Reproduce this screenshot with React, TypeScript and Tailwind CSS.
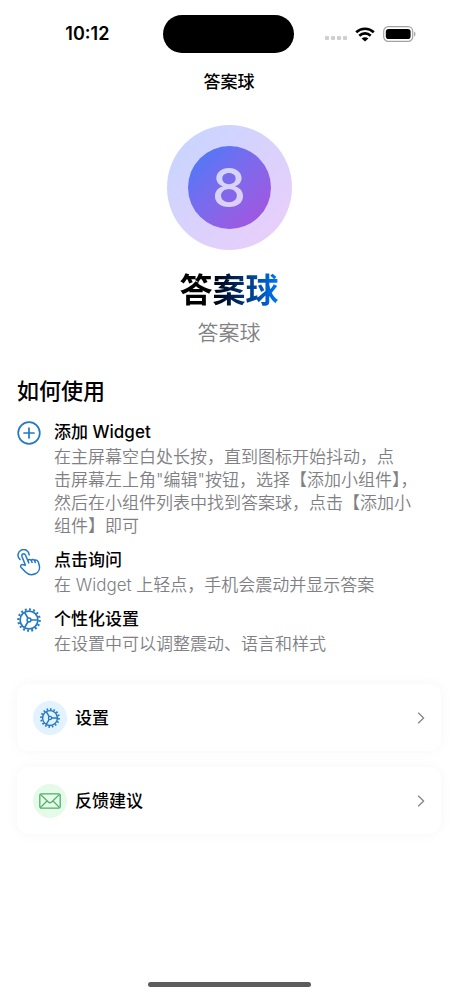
import type { ReactNode } from "react";

function WifiIcon() {
  return (
    <svg viewBox="0 0 20 15" className="h-[15px] w-5" aria-hidden="true">
      <g fill="none" stroke="#000" strokeWidth="2.7">
        <path d="M1.2 5.2C6.2.6 13.8.6 18.8 5.2" />
        <path d="M4.3 8.7c3.3-3 8.1-3 11.4 0" />
      </g>
      <path d="M10 14.6 6.6 11.4c1.9-1.7 4.9-1.7 6.8 0z" fill="#000" />
    </svg>
  );
}

function BatteryIcon() {
  return (
    <svg viewBox="0 0 33 16" className="h-4 w-[33px]" aria-hidden="true">
      <rect x=".7" y=".7" width="29" height="14.6" rx="4.6" fill="#fff" stroke="#a3a3a3" strokeWidth="1.2" />
      <rect x="2.8" y="3" width="24.8" height="10" rx="2.8" fill="#000" />
      <path d="M31.2 5.4c1.6.7 1.6 4.5 0 5.2z" fill="#999" />
    </svg>
  );
}

function PlusCircleIcon() {
  return (
    <svg viewBox="0 0 24 24" className="size-6" fill="none" stroke="#2478c4" strokeWidth="1.7" strokeLinecap="round" aria-hidden="true">
      <circle cx="12" cy="12" r="10.8" />
      <path d="M12 7v10M7 12h10" />
    </svg>
  );
}

function TapIcon() {
  return (
    <svg viewBox="0 0 24 27" className="h-[27px] w-6" fill="none" stroke="#2478c4" strokeWidth="1.5" strokeLinecap="round" strokeLinejoin="round" aria-hidden="true">
      <path d="M3 10.4A5.6 5.6 0 1 1 12.2 6" />
      <path d="M8.4 16.2 5 7.4C4.2 5 7.4 3.8 8.4 6l2.4 5.4c.9-1.4 2.9-1.2 3.5 0 .8-1.2 2.7-1 3.3.2 1.2-1.1 2.8-.5 3.5 1l1.1 3.4c1 3.8-.6 7.4-3.8 8.8-3.6 1.5-7.4.8-9.9-1.8L4.2 18.4c-1.5-1.7.3-3.5 2-2.6z" />
      <path d="m10.8 11.4 1 2.5M14.3 11.4l.8 2.2M17.6 11.6l.7 2" />
    </svg>
  );
}

function GearIcon({ className }: { className: string }) {
  return (
    <svg viewBox="0 0 24 24" className={className} fill="none" stroke="#2478c4" strokeWidth="1.7" aria-hidden="true">
      <circle cx="12" cy="12" r="8.9" />
      <circle cx="12" cy="12" r="10.7" strokeWidth="2.2" pathLength="96" strokeDasharray="2.8 3.2" />
      <circle cx="12" cy="12" r="1.9" strokeWidth="1.5" />
      <path d="M14 12h7M11 10.3 7.4 4.1M11 13.7l-3.6 6.2" />
    </svg>
  );
}

function MailIcon() {
  return (
    <svg viewBox="0 0 22 16" className="h-4 w-[22px]" fill="none" stroke="#4fae68" strokeWidth="1.3" strokeLinejoin="round" aria-hidden="true">
      <rect x=".8" y=".8" width="20.4" height="14.4" rx="1.6" />
      <path d="m1.4 1.4 8.2 7.8c.8.8 2 .8 2.8 0l8.2-7.8M1.4 14.6l6.8-6.8M20.6 14.6l-6.8-6.8" />
    </svg>
  );
}

type StepProps = {
  icon: ReactNode;
  title: string;
  children: ReactNode;
};

function Step({ icon, title, children }: StepProps) {
  return (
    <li className="flex items-start gap-[13px]">
      <span className="flex w-6 shrink-0 justify-center">{icon}</span>
      <div>
        <h3 className="text-[17px] leading-[22px] font-medium">{title}</h3>
        <p className="mt-[3px] text-[17px] leading-[23px] font-[350] text-[#808084]">{children}</p>
      </div>
    </li>
  );
}

type CardProps = {
  icon: ReactNode;
  label: string;
  tint: string;
};

function Card({ icon, label, tint }: CardProps) {
  return (
    <button
      type="button"
      className="flex h-[67px] w-full items-center rounded-xl bg-white px-4 text-left shadow-[0_0_14px_rgba(0,0,0,0.04)]"
    >
      <span className={`flex size-[34px] items-center justify-center rounded-full ${tint}`}>{icon}</span>
      <span className="ml-2 flex-1 text-[17px] leading-6 font-medium">{label}</span>
      <svg viewBox="0 0 8 12" className="h-3 w-2" fill="none" stroke="#858589" strokeWidth="1.3" aria-hidden="true">
        <path d="m1.2.8 5.4 5.2-5.4 5.2" />
      </svg>
    </button>
  );
}

export default function App() {
  return (
    <div className="flex min-h-screen flex-col bg-white font-[Inter,'Noto_Sans_CJK_SC',sans-serif] text-black" lang="zh-CN">
      <div className="grid grid-cols-3 items-center pt-[15px]">
        <span className="pl-[22px] text-center text-[18px] leading-6 font-semibold">10:12</span>
        <span className="h-[38px] w-[131px] justify-self-center rounded-full bg-black" />
        <span className="flex items-center justify-end gap-2 pr-[42px]">
          <span className="flex gap-0.5 pt-2">
            <i className="size-1 rounded-[1px] bg-[#cfcfcf]" />
            <i className="size-1 rounded-[1px] bg-[#cfcfcf]" />
            <i className="size-1 rounded-[1px] bg-[#cfcfcf]" />
            <i className="size-1 rounded-[1px] bg-[#cfcfcf]" />
          </span>
          <WifiIcon />
          <BatteryIcon />
        </span>
      </div>

      <header className="pt-[17px] text-center text-[17px] leading-6 font-medium">答案球</header>

      <main className="px-[17px]">
        <section className="flex flex-col items-center pt-[31px]">
          <div className="flex size-[125px] items-center justify-center rounded-full bg-linear-to-br from-[#c3d6ff] to-[#edcdfa]">
            <div className="flex size-[83px] items-center justify-center rounded-full bg-linear-to-br from-[#3b7bfa] to-[#a84fdc] text-[54px] leading-none font-medium text-white/70">
              8
            </div>
          </div>
          <h1 className="mt-[19px] bg-linear-to-r from-black from-20% to-[#007aff] bg-clip-text text-[33px] leading-[42px] font-bold text-transparent">
            答案球
          </h1>
          <p className="mt-2 text-[21px] leading-7 font-[350] text-[#818184]">答案球</p>
        </section>

        <section className="pt-[30px]">
          <h2 className="text-[22px] leading-7 font-medium">如何使用</h2>
          <ul className="mt-4 flex flex-col gap-[11px]">
            <Step icon={<PlusCircleIcon />} title="添加 Widget">
              在主屏幕空白处长按，直到图标开始抖动，点<br />
              击屏幕左上角"编辑"按钮，选择【添加小组件】，<br />
              然后在小组件列表中找到答案球，点击【添加小<br />
              组件】即可
            </Step>
            <Step icon={<TapIcon />} title="点击询问">
              在 Widget 上轻点，手机会震动并显示答案
            </Step>
            <Step icon={<GearIcon className="size-6" />} title="个性化设置">
              在设置中可以调整震动、语言和样式
            </Step>
          </ul>
        </section>

        <nav className="flex flex-col gap-4 pt-7">
          <Card icon={<GearIcon className="size-5" />} label="设置" tint="bg-[#e3f2ff]" />
          <Card icon={<MailIcon />} label="反馈建议" tint="bg-[#e6fae9]" />
        </nav>
      </main>

      <div className="mt-auto flex justify-center pt-6 pb-[9px]">
        <span className="h-[5px] w-[163px] rounded-full bg-[#5c5c5c]" />
      </div>
    </div>
  );
}
